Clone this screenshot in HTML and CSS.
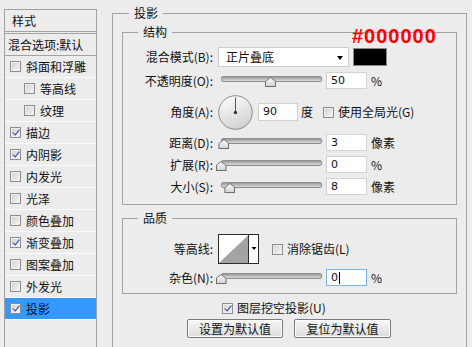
FILE: index.html
```html
<!DOCTYPE html>
<html lang="zh-CN">
<head>
    <meta charset="UTF-8">
    <title>图层样式 - 投影</title>
    <link rel="stylesheet" href="styles.css">
</head>
<body>
    <div class="dialog">
        <!-- Style list -->
        <ul class="style-list">
            <li class="style-head">样式</li>
            <li class="style-blend">混合选项:默认</li>
            <li class="style-item"><span class="cb"></span>斜面和浮雕</li>
            <li class="style-item sub"><span class="cb"></span>等高线</li>
            <li class="style-item sub"><span class="cb"></span>纹理</li>
            <li class="style-item"><span class="cb on"></span>描边</li>
            <li class="style-item"><span class="cb on"></span>内阴影</li>
            <li class="style-item"><span class="cb"></span>内发光</li>
            <li class="style-item"><span class="cb"></span>光泽</li>
            <li class="style-item"><span class="cb"></span>颜色叠加</li>
            <li class="style-item"><span class="cb on"></span>渐变叠加</li>
            <li class="style-item"><span class="cb"></span>图案叠加</li>
            <li class="style-item"><span class="cb"></span>外发光</li>
            <li class="style-item active"><span class="cb on"></span>投影</li>
        </ul>

        <!-- Drop shadow settings -->
        <fieldset class="group outer">
            <legend>投影</legend>

            <fieldset class="group">
                <legend>结构</legend>
                <div class="rows">
                    <div class="row">
                        <span class="lbl">混合模式(B):</span>
                        <div class="select">正片叠底<span class="arrow"></span></div>
                        <span class="swatch"></span>
                    </div>
                    <div class="row">
                        <span class="lbl">不透明度(O):</span>
                        <div class="slider"><span class="thumb" style="left: 50%"></span></div>
                        <span class="field">50</span>
                        <span class="unit">%</span>
                    </div>
                    <div class="row angle-row">
                        <span class="lbl">角度(A):</span>
                        <svg class="dial" width="35" height="35" viewBox="0 0 35 35">
                            <defs>
                                <linearGradient id="dialFill" x1="0" y1="0" x2="0.4" y2="1">
                                    <stop offset="0" stop-color="#ffffff"/>
                                    <stop offset="1" stop-color="#d4d4d4"/>
                                </linearGradient>
                            </defs>
                            <circle cx="17.5" cy="17.5" r="16.8" fill="url(#dialFill)" stroke="#8a8a8a"/>
                            <line x1="17.5" y1="17.5" x2="17.5" y2="2.5" stroke="#555"/>
                            <circle cx="17.5" cy="17.5" r="1.7" fill="#333"/>
                        </svg>
                        <span class="field angle">90</span>
                        <span class="unit deg">度</span>
                        <span class="cb"></span>
                        <span class="cb-text">使用全局光(G)</span>
                    </div>
                    <div class="row">
                        <span class="lbl">距离(D):</span>
                        <div class="slider"><span class="thumb" style="left: 3%"></span></div>
                        <span class="field">3</span>
                        <span class="unit">像素</span>
                    </div>
                    <div class="row">
                        <span class="lbl">扩展(R):</span>
                        <div class="slider"><span class="thumb" style="left: 0%"></span></div>
                        <span class="field">0</span>
                        <span class="unit">%</span>
                    </div>
                    <div class="row">
                        <span class="lbl">大小(S):</span>
                        <div class="slider"><span class="thumb" style="left: 9%"></span></div>
                        <span class="field">8</span>
                        <span class="unit">像素</span>
                    </div>
                </div>
            </fieldset>

            <fieldset class="group quality">
                <legend>品质</legend>
                <div class="rows">
                    <div class="row contour-row">
                        <span class="lbl">等高线:</span>
                        <svg class="contour" width="41" height="30" viewBox="0 0 41 30">
                            <rect x="0.5" y="0.5" width="40" height="29" fill="#fff" stroke="#2b2b2b"/>
                            <path d="M1 29 L30.5 1 V29 Z" fill="#a3a3a3"/>
                            <line x1="30.5" y1="1" x2="30.5" y2="29" stroke="#2b2b2b"/>
                            <path d="M33.5 13 h5 l-2.5 3 z" fill="#000"/>
                        </svg>
                        <span class="cb"></span>
                        <span class="cb-text">消除锯齿(L)</span>
                    </div>
                    <div class="row">
                        <span class="lbl">杂色(N):</span>
                        <div class="slider"><span class="thumb" style="left: 0%"></span></div>
                        <span class="field focus">0<i class="caret"></i></span>
                        <span class="unit">%</span>
                    </div>
                </div>
            </fieldset>

            <div class="knockout">
                <span class="cb on"></span>
                <span class="cb-text">图层挖空投影(U)</span>
            </div>

            <div class="buttons">
                <button class="btn">设置为默认值</button>
                <button class="btn">复位为默认值</button>
            </div>
        </fieldset>
    </div>

    <div class="note">#000000</div>
</body>
</html>
```

FILE: styles.css
```css
:root {
    --bg: #ececec;
    --line: #a2a2a2;
    --text: #111111;
    --select-blue: #3399ff;
}

* {
    margin: 0;
    padding: 0;
    box-sizing: border-box;
}

body {
    width: 472px;
    height: 347px;
    overflow: hidden;
    position: relative;
    background: var(--bg);
    color: var(--text);
    font-family: "Noto Sans CJK SC", "Noto Sans", sans-serif;
    font-size: 12px;
    line-height: 14px;
}

.dialog {
    display: flex;
    align-items: flex-start;
}

/* Left style list */
.style-list {
    list-style: none;
    width: 93px;
    height: 338px;
    margin: 9px 0 0 4px;
    border: 1px solid var(--line);
    border-bottom: none;
}

.style-list li {
    display: flex;
    align-items: center;
    height: 22px;
    border-bottom: 1px solid #fbfbfb;
}

.style-list .style-head {
    height: 24px;
    padding-left: 7px;
    border-bottom: 3px double var(--line);
}

.style-list .style-blend {
    height: 22px;
    padding-left: 3px;
    border-bottom: 1px solid var(--line);
}

.style-item {
    gap: 5px;
    padding-left: 5px;
}

.style-item.sub {
    padding-left: 19px;
}

.style-item.active {
    background: var(--select-blue);
}

/* Checkbox */
.cb {
    position: relative;
    flex: none;
    width: 11px;
    height: 11px;
    border: 1px solid #8d8d8d;
    background: linear-gradient(135deg, #cfcfcf 0%, #f7f7f7 100%);
    box-shadow: inset 0 0 0 1px #efefef;
}

.cb.on::after {
    content: '';
    position: absolute;
    left: 3px;
    top: 0;
    width: 3px;
    height: 6px;
    border: solid #2e4ba6;
    border-width: 0 1.5px 1.5px 0;
    transform: rotate(38deg);
}

.cb-text {
    margin-left: 4px;
}

/* Group boxes */
.group {
    min-width: 0;
    width: 335px;
    margin: 6px 0 0 9px;
    padding: 8px 0 9px;
    border: 1px solid var(--line);
}

.group legend {
    margin-left: 15px;
    padding: 0 5px;
    line-height: 14px;
}

.group.outer {
    width: 355px;
    height: 341px;
    margin: 6px 0 0 15px;
    padding: 0;
    border-bottom: none;
}

.group.outer > legend {
    margin-left: 16px;
}

.group.outer > .group:first-of-type {
    margin-top: 5px;
}

.group.quality {
    padding: 9px 0 7px;
}

.rows {
    display: flex;
    flex-direction: column;
    gap: 5px;
}

.row {
    display: flex;
    align-items: center;
    height: 17px;
}

.row:first-child {
    height: 20px;
}

.angle-row {
    height: 34px;
    margin-top: 1px;
}

.rows .contour-row {
    height: 30px;
}

.lbl {
    width: 90px;
    margin-right: 5px;
    text-align: right;
    white-space: nowrap;
}

/* Select + swatch */
.select {
    position: relative;
    width: 131px;
    height: 20px;
    padding-left: 7px;
    display: flex;
    align-items: center;
    background: #fff;
    border: 1px solid #cdcdcd;
}

.select .arrow {
    position: absolute;
    right: 5px;
    top: 8px;
    border-left: 3.5px solid transparent;
    border-right: 3.5px solid transparent;
    border-top: 4px solid #000;
}

.swatch {
    width: 34px;
    height: 18px;
    margin-left: 4px;
    background: #000;
    border: 1px solid #8a8a8a;
}

/* Slider */
.slider {
    position: relative;
    align-self: flex-start;
    width: 99px;
    height: 12px;
    margin: 4px 0 0 3px;
}

.slider::before {
    content: '';
    position: absolute;
    left: 0;
    right: -2px;
    top: 0;
    height: 4px;
    border-radius: 2px;
    background: linear-gradient(#9a9a9a, #dadada);
    border: 1px solid #8e8e8e;
}

.thumb {
    position: absolute;
    top: 1px;
    width: 11px;
    height: 10px;
    margin-left: -5.5px;
    background: #6e6e6e;
    clip-path: polygon(50% 0, 100% 45%, 100% 100%, 0 100%, 0 45%);
}

.thumb::before {
    content: '';
    position: absolute;
    inset: 1px;
    background: linear-gradient(#fafafa, #d4d4d4);
    clip-path: polygon(50% 0, 100% 45%, 100% 100%, 0 100%, 0 45%);
}

/* Number fields */
.field {
    display: flex;
    align-items: center;
    width: 41px;
    height: 17px;
    margin-left: 6px;
    padding-left: 4px;
    background: #fff;
    border: 1px solid #d2d2d2;
    font-family: "DejaVu Sans", "Noto Sans", sans-serif;
    font-size: 11px;
}

.field.angle {
    width: 40px;
    height: 18px;
    margin-left: 5px;
}

.field.focus {
    border-color: #7eb4ea;
}

.caret {
    display: inline-block;
    width: 1px;
    height: 12px;
    margin-left: 1px;
    background: #000;
}

.unit {
    margin-left: 4px;
}

.unit.deg {
    margin: 0 10px 0 3px;
}

.dial {
    flex: none;
}

.contour {
    flex: none;
    margin-right: 13px;
}

/* Knockout + buttons */
.knockout {
    display: flex;
    align-items: center;
    height: 14px;
    margin: 7px 0 0 109px;
}

.buttons {
    display: flex;
    gap: 11px;
    margin: 4px 0 0 74px;
}

.btn {
    width: 96px;
    height: 19px;
    border: 1px solid #7a7a7a;
    border-radius: 2px;
    background: linear-gradient(#f7f7f7, #dcdcdc);
    box-shadow: inset 0 0 0 1px #fdfdfd;
    font-family: "Noto Sans CJK SC", sans-serif;
    font-size: 12px;
    line-height: 14px;
    color: #111;
}

.btn + .btn {
    width: 97px;
}

/* Colour annotation */
.note {
    position: absolute;
    left: 352px;
    top: 26px;
    font-family: "Liberation Sans", Arial, sans-serif;
    font-size: 20px;
    font-weight: bold;
    line-height: 20px;
    letter-spacing: 1px;
    color: #ff0000;
}
```
